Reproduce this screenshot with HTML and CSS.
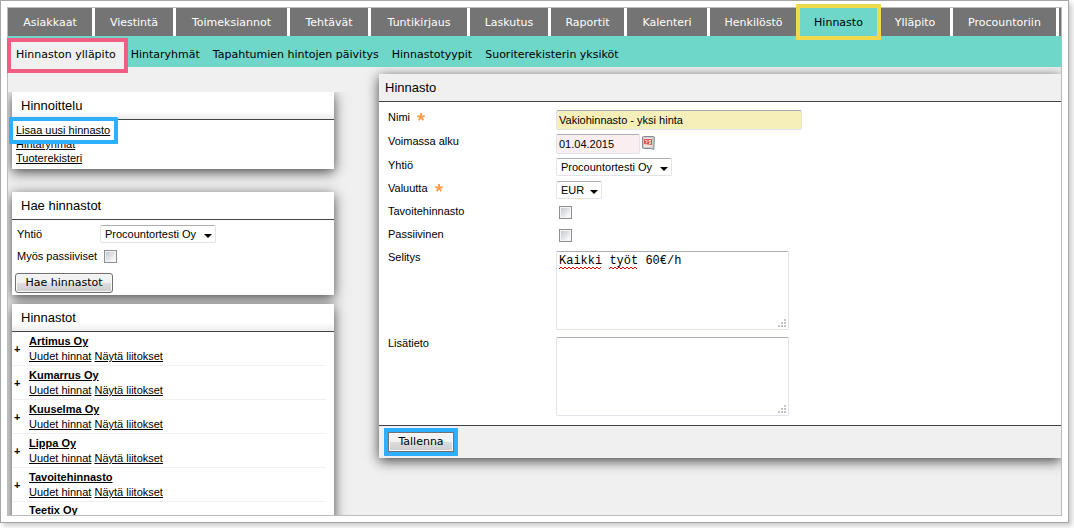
FILE: index.html
```html
<!DOCTYPE html>
<html lang="fi">
<head>
<meta charset="utf-8">
<title>Hinnasto</title>
<link rel="stylesheet" href="styles.css">
</head>
<body>
<div class="frame">
  <div class="app">
    <nav class="tabs">
      <a class="tab" href="#">Asiakkaat</a>
      <a class="tab" href="#">Viestintä</a>
      <a class="tab" href="#">Toimeksiannot</a>
      <a class="tab" href="#">Tehtävät</a>
      <a class="tab" href="#">Tuntikirjaus</a>
      <a class="tab" href="#">Laskutus</a>
      <a class="tab" href="#">Raportit</a>
      <a class="tab" href="#">Kalenteri</a>
      <a class="tab" href="#">Henkilöstö</a>
      <a class="tab tab-active" href="#">Hinnasto</a>
      <a class="tab" href="#">Ylläpito</a>
      <a class="tab" href="#">Procountoriin</a>
      <span class="tab"></span>
    </nav>
    <nav class="subnav">
      <a class="sub sub-active" href="#">Hinnaston ylläpito</a>
      <a class="sub" href="#">Hintaryhmät</a>
      <a class="sub" href="#">Tapahtumien hintojen päivitys</a>
      <a class="sub" href="#">Hinnastotyypit</a>
      <a class="sub" href="#">Suoriterekisterin yksiköt</a>
    </nav>
    <div class="content">
      <aside class="sidebar">
        <section class="panel panel-links">
          <h2 class="panel-head shaded">Hinnoittelu</h2>
          <ul class="links">
            <li class="marked"><a href="#">Lisaa uusi hinnasto</a></li>
            <li><a href="#">Hintaryhmät</a></li>
            <li><a href="#">Tuoterekisteri</a></li>
          </ul>
        </section>
        <section class="panel">
          <h2 class="panel-head">Hae hinnastot</h2>
          <form class="search">
            <div class="search-row">
              <label for="s-company">Yhtiö</label>
              <span class="select"><select id="s-company"><option>Procountortesti Oy</option></select></span>
            </div>
            <div class="search-row">
              <label for="s-passive">Myös passiiviset</label>
              <input class="check" type="checkbox" id="s-passive">
            </div>
            <button class="button search-button" type="button">Hae hinnastot</button>
          </form>
        </section>
        <section class="panel panel-list">
          <h2 class="panel-head shaded">Hinnastot</h2>
          <ul class="list">
            <li class="item"><span class="plus">+</span><div><a class="name" href="#">Artimus Oy</a><p><a href="#">Uudet hinnat</a> <a href="#">Näytä liitokset</a></p></div></li>
            <li class="item"><span class="plus">+</span><div><a class="name" href="#">Kumarrus Oy</a><p><a href="#">Uudet hinnat</a> <a href="#">Näytä liitokset</a></p></div></li>
            <li class="item"><span class="plus">+</span><div><a class="name" href="#">Kuuselma Oy</a><p><a href="#">Uudet hinnat</a> <a href="#">Näytä liitokset</a></p></div></li>
            <li class="item"><span class="plus">+</span><div><a class="name" href="#">Lippa Oy</a><p><a href="#">Uudet hinnat</a> <a href="#">Näytä liitokset</a></p></div></li>
            <li class="item"><span class="plus">+</span><div><a class="name" href="#">Tavoitehinnasto</a><p><a href="#">Uudet hinnat</a> <a href="#">Näytä liitokset</a></p></div></li>
            <li class="item item-last"><span class="plus"></span><div><a class="name" href="#">Teetix Oy</a></div></li>
          </ul>
        </section>
      </aside>
      <main class="panel editor">
        <h1 class="panel-head editor-head">Hinnasto</h1>
        <form class="form">
          <div class="row">
            <label for="f-name">Nimi <svg class="star" viewBox="0 0 8 8"><path d="M4 0V4M4 4L0.3 3M4 4L7.7 3M4 4L1.7 7.3M4 4L6.3 7.3"/></svg></label>
            <input class="text text-name" id="f-name" type="text" value="Vakiohinnasto - yksi hinta">
          </div>
          <div class="row">
            <label for="f-date">Voimassa alku</label>
            <div class="date">
              <input class="text text-date" id="f-date" type="text" value="01.04.2015">
              <button class="calendar" type="button" aria-label="Kalenteri"><svg viewBox="0 0 13 14">
                <path d="M1.5 .5H11.5Q12.5 .5 12.4 2L11.8 13.5L9 12.5H2Q.5 12.5 .5 11V1.5Q.5 .5 1.5 .5Z" fill="#c9ced3" stroke="#858b91"/>
                <path d="M2 2H10V11H2Z" fill="#f1e4e0"/>
                <path d="M2 3H10V9L2 8Z" fill="#dc5848"/>
                <path d="M3 4.5H5V6L4 7.5M9 4.5H7V6H8.5V7.5H7" fill="none" stroke="#fbd9d0"/>
              </svg></button>
            </div>
          </div>
          <div class="row">
            <label for="f-company">Yhtiö</label>
            <span class="select"><select id="f-company"><option>Procountortesti Oy</option></select></span>
          </div>
          <div class="row">
            <label for="f-currency">Valuutta <svg class="star" viewBox="0 0 8 8"><path d="M4 0V4M4 4L0.3 3M4 4L7.7 3M4 4L1.7 7.3M4 4L6.3 7.3"/></svg></label>
            <span class="select select-small"><select id="f-currency"><option>EUR</option></select></span>
          </div>
          <div class="row">
            <label for="f-target">Tavoitehinnasto</label>
            <input class="check check-form" id="f-target" type="checkbox">
          </div>
          <div class="row">
            <label for="f-passive">Passiivinen</label>
            <input class="check check-form" id="f-passive" type="checkbox">
          </div>
          <div class="row">
            <label for="f-desc">Selitys</label>
            <div class="area">
              <textarea id="f-desc" spellcheck="false">Kaikki työt 60€/h</textarea>
              <svg class="squiggle" viewBox="0 0 80 4"><path d="M0 3L2 1L4 3L6 1L8 3L10 1L12 3L14 1L16 3L18 1L20 3L22 1L24 3L26 1L28 3L30 1L32 3L34 1L36 3L38 1L40 3L42 1M50 3L52 1L54 3L56 1L58 3L60 1L62 3L64 1L66 3L68 1L70 3L72 1L74 3L76 1L78 3"/></svg>
              <svg class="grip" viewBox="0 0 8 8"><path d="M6 0h2v2h-2zM3 3h2v2h-2zM6 3h2v2h-2zM0 6h2v2h-2zM3 6h2v2h-2zM6 6h2v2h-2z"/></svg>
            </div>
          </div>
          <div class="row">
            <label for="f-info">Lisätieto</label>
            <div class="area">
              <textarea id="f-info"></textarea>
              <svg class="grip" viewBox="0 0 8 8"><path d="M6 0h2v2h-2zM3 3h2v2h-2zM6 3h2v2h-2zM0 6h2v2h-2zM3 6h2v2h-2zM6 6h2v2h-2z"/></svg>
            </div>
          </div>
        </form>
        <footer class="editor-foot">
          <button class="button save" type="button">Tallenna</button>
        </footer>
      </main>
    </div>
  </div>
</div>
</body>
</html>
```
FILE: styles.css
```css
*,
*::after {
  box-sizing: border-box;
}

body {
  margin: 0;
  height: 100vh;
  padding: 0 5px 5px 0;
  overflow: hidden;
  background: #fff;
  color: #000;
  font: 11px/14px "Liberation Sans", Arial, sans-serif;
}

ul,
p {
  margin: 0;
  padding: 0;
  list-style: none;
}

a {
  color: #000;
}

.frame {
  height: 100%;
  padding: 6px;
  border: 1px solid #a6a6a6;
  background: #fff;
  box-shadow: 3px 3px 5px #ccc;
}

.app {
  display: flex;
  flex-direction: column;
  height: 100%;
  border: 1px solid #bcbcbc;
}

.tabs {
  display: grid;
  flex: none;
  grid-template-columns: 84fr 78fr 111fr 78fr 96fr 78fr 73fr 80fr 87fr 77fr 70fr 103fr 2fr;
  gap: 3px;
  height: 28px;
}

.tab {
  min-width: 0;
  padding-top: 1px;
  background: #747474;
  color: #fff;
  font: 11px/27px "DejaVu Sans", Verdana, sans-serif;
  text-align: center;
  text-decoration: none;
  white-space: nowrap;
}

.tab-active {
  z-index: 3;
  outline: 4px solid #f0d94c;
  background: #6fd6ca;
  color: #000;
}

.subnav {
  position: relative;
  z-index: 2;
  display: flex;
  flex: none;
  align-items: flex-start;
  gap: 13px;
  height: 31px;
  padding: 6px 3px 0;
  background: #6fd6ca;
}

.sub {
  font: 11px/25px "DejaVu Sans", Verdana, sans-serif;
  text-decoration: none;
  white-space: nowrap;
}

.sub-active {
  margin-right: -6px;
  padding: 0 8px 2px 5px;
  outline: 4px solid #ef5f83;
  background: #f0f0f0;
}

.content {
  display: flex;
  flex: 1;
  align-items: flex-start;
  min-height: 0;
  overflow: hidden;
  background: #f0f0f0;
}

.sidebar {
  flex: none;
  align-self: stretch;
  width: 371px;
  margin-top: 25px;
  padding: 0 45px 0 4px;
  overflow: hidden;
}

.panel {
  margin-bottom: 9px;
  background: #fff;
  box-shadow: 0 3px 12px #444;
}

.panel-links {
  margin-bottom: 23px;
}

.panel-head {
  margin: 0;
  padding: 0 9px;
  border-bottom: 1px solid #444;
  font-size: 13px;
  font-weight: 400;
  line-height: 27px;
}

.panel-head.shaded {
  background: linear-gradient(#fff 70%, #ececec);
}

.links {
  padding: 3px 4px 4px;
}

.marked {
  position: relative;
}

.marked::after {
  content: "";
  position: absolute;
  top: -6px;
  left: -7px;
  width: 109px;
  height: 27px;
  border: 4px solid #2fafff;
  border-radius: 1px;
  pointer-events: none;
}

.search {
  padding: 5px 3px 2px;
}

.search-row {
  display: grid;
  grid-template-columns: 83px auto;
  align-items: center;
  justify-content: start;
  min-height: 18px;
  margin-bottom: 4px;
  padding-left: 2px;
}

.search-row .check {
  margin-left: 4px;
}

.search-button {
  display: block;
  width: 98px;
  margin-top: 8px;
}

.select {
  position: relative;
  display: block;
  width: 116px;
}

.select-small {
  width: 46px;
}

.select::after {
  content: "";
  position: absolute;
  top: 9px;
  right: 4px;
  border: 4px solid transparent;
  border-top-color: #000;
  pointer-events: none;
}

select,
.text,
textarea {
  display: block;
  margin: 0;
  border: 1px solid #e2e3ea;
  border-top-color: #abadb3;
  border-radius: 2px;
  outline: 0;
  background: #fff;
  color: #000;
  font: 11px/14px "Liberation Sans", Arial, sans-serif;
}

select {
  width: 100%;
  height: 18px;
  padding: 0 4px;
  appearance: none;
}

.check {
  width: 13px;
  height: 13px;
  margin: 0;
  border: 1px solid #8e8f8f;
  background: linear-gradient(135deg, #c4c9cf, #fff) content-box, #f4f4f4;
  padding: 1px;
  appearance: none;
}

.check:checked {
  background: #444 content-box;
}

.button {
  height: 20px;
  padding: 0 8px;
  border: 1px solid #707070;
  border-radius: 3px;
  background: linear-gradient(#f2f2f2 50%, #dcdcdc 50%, #cfcfcf);
  box-shadow: inset 0 0 0 1px #f8f8f8;
  color: #000;
  font: 11px/16px "DejaVu Sans", Verdana, sans-serif;
  white-space: nowrap;
}

.item {
  display: grid;
  grid-template-columns: 15px 1fr;
  align-items: center;
  min-height: 34px;
  margin-right: 8px;
  padding: 2px 0 1px 2px;
  border-bottom: 1px solid #f0f0f0;
  line-height: 15px;
}

.item-last {
  align-items: start;
  padding-top: 1px;
}

.name,
.plus {
  font-weight: 700;
}

.editor {
  flex: 1;
  min-width: 0;
  margin: 7px 0 0;
}

.editor-head {
  padding: 0 6px;
  background: #f0f0f0;
}

.form {
  display: grid;
  gap: 4px;
  padding: 8px 9px 7px;
}

.row {
  display: grid;
  grid-template-columns: 168px 1fr;
  align-items: start;
  min-height: 19px;
}

.star {
  width: 8px;
  height: 8px;
  margin-left: 4px;
  fill: none;
  stroke: #f9a04e;
  stroke-width: 2;
}

.text {
  height: 20px;
  padding: 0 2px;
}

.text-name {
  width: 246px;
  background: #f7efba;
}

.text-date {
  width: 84px;
  background: #fbeef1;
}

.date {
  display: flex;
  align-items: flex-start;
  gap: 2px;
}

.calendar {
  width: 13px;
  height: 14px;
  margin: 2px 0 0;
  padding: 0;
  border: 0;
  background: none;
}

.calendar svg,
.area svg {
  display: block;
}

.check-form {
  margin: 2px 0 0 3px;
}

.area {
  position: relative;
  width: 233px;
  padding: 1px 0 2px;
}

textarea {
  width: 100%;
  height: 79px;
  padding: 2px;
  font: 12px/14px "Liberation Mono", "Courier New", monospace;
  resize: none;
}

.squiggle {
  position: absolute;
  top: 16px;
  left: 3px;
  width: 80px;
  height: 4px;
  fill: none;
  stroke: #e00000;
}

.grip {
  position: absolute;
  right: 3px;
  bottom: 5px;
  width: 8px;
  height: 8px;
  fill: #c4c4c4;
}

.editor-foot {
  padding: 6px 9px;
  border-top: 1px solid #444;
  background: #f0f0f0;
}

.save {
  display: block;
  width: 66px;
  border-radius: 0;
  outline: 4px solid #2fafff;
}
```
